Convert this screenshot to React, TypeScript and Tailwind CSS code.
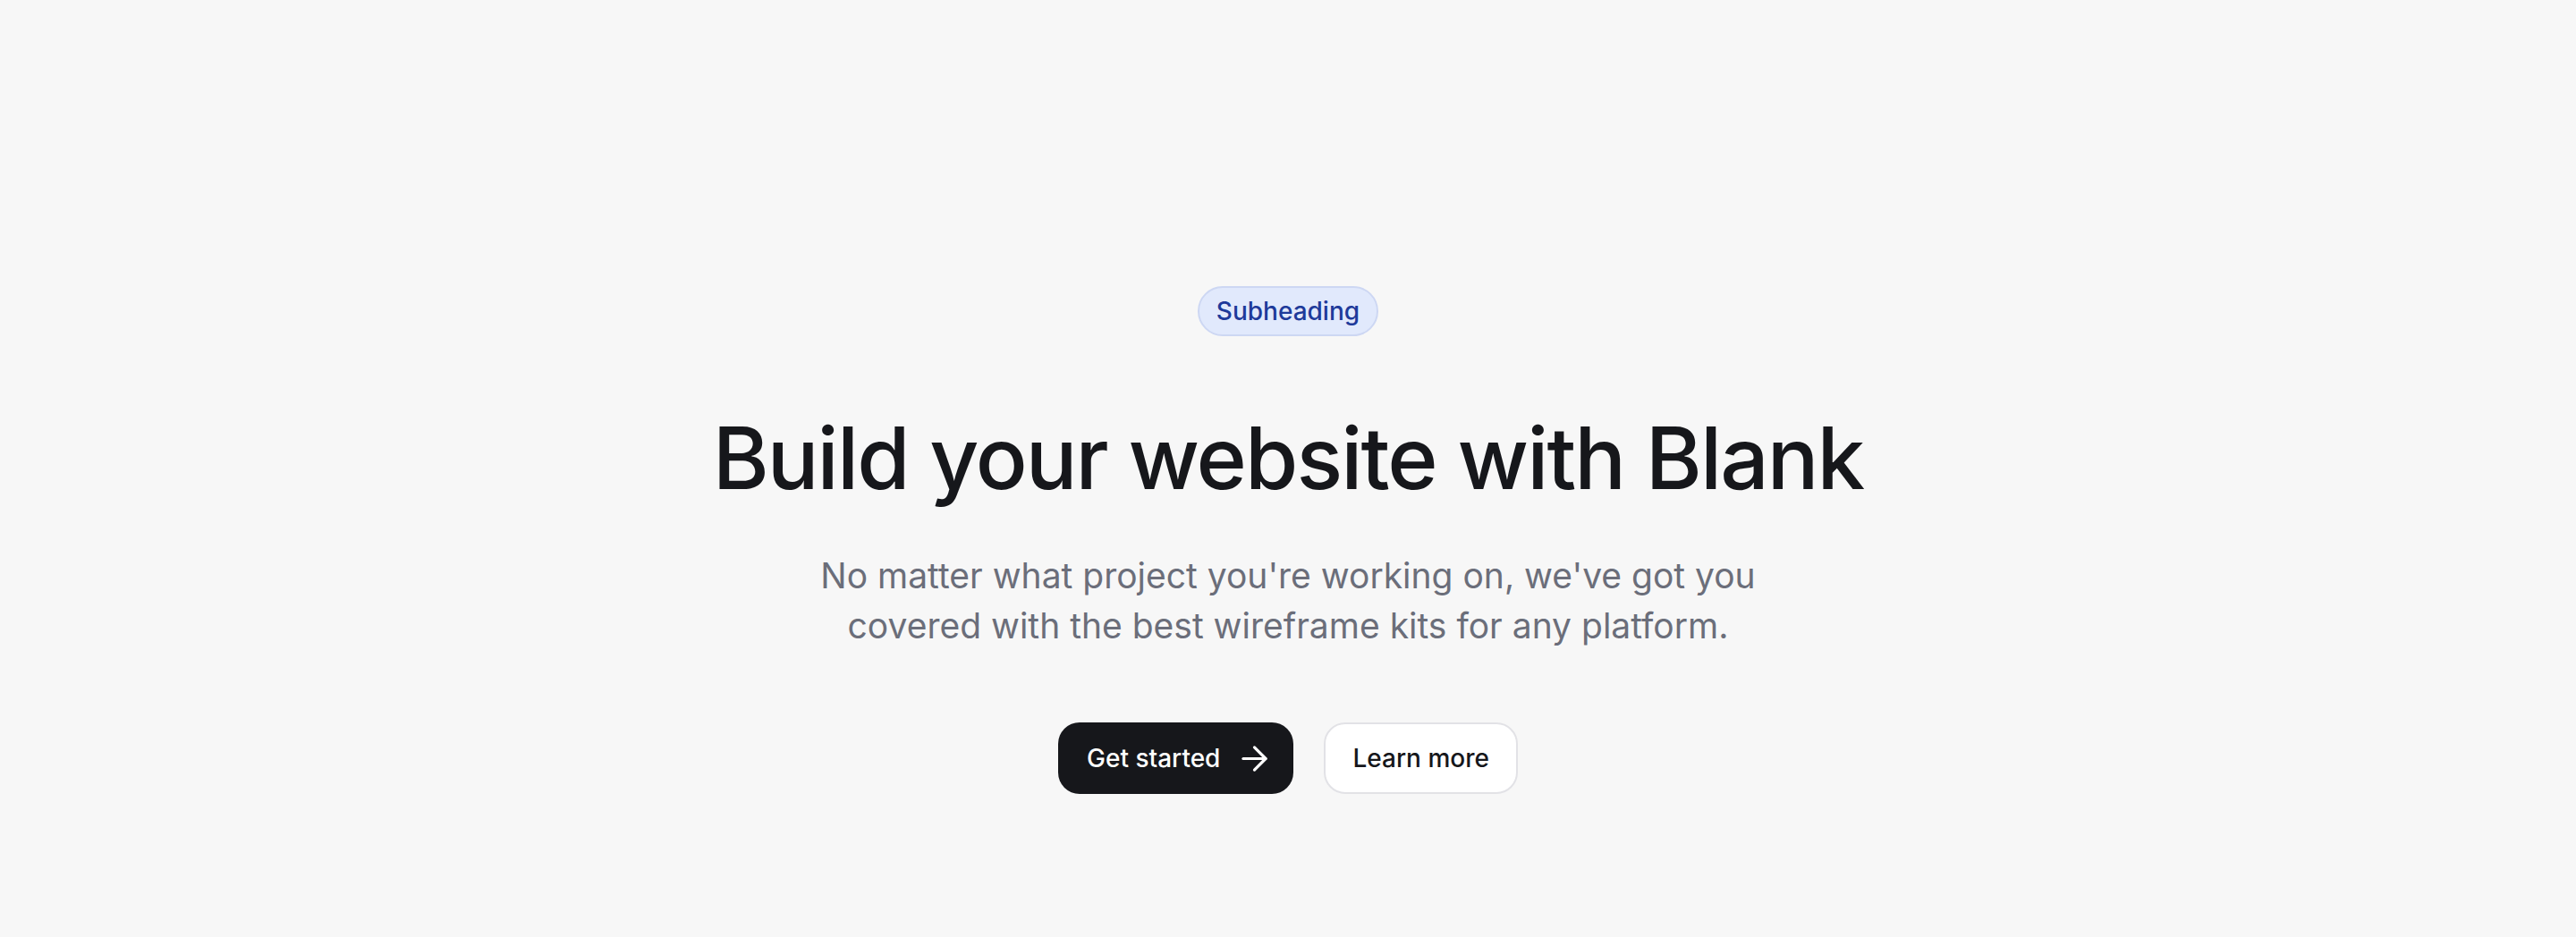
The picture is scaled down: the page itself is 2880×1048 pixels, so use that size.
import { ArrowRight } from 'lucide-react';

export default function App() {
  return (
    <div className="min-h-[1048px] w-full bg-[#f7f7f7] font-['Inter',sans-serif]">
      <section className="flex flex-col items-center px-8 pt-[320px] pb-[160px] text-center">
        {/* Badge */}
        <span className="inline-flex h-[56px] items-center rounded-full border-2 border-[#cdd7f3] bg-[#e1e9fc] px-[19px] text-[28px] font-medium text-[#1e3a9a]">
          Subheading
        </span>

        <h1 className="mt-[78px] text-[96px] leading-[116px] font-medium tracking-[-0.02em] text-[#16171b]">
          Build your website with Blank
        </h1>

        <p className="mt-[46px] max-w-[1152px] text-[39px] leading-[56px] text-[#6b6e7a]">
          No matter what project you're working on, we've got you covered with the best wireframe kits for any platform.
        </p>

        <div className="mt-[80px] flex items-center gap-[34px]">
          <button className="flex h-[80px] items-center gap-[17px] rounded-[24px] bg-[#16171b] pl-[32px] pr-[22px] text-[28px] font-medium text-white">
            Get started
            <ArrowRight className="h-[43px] w-[43px]" strokeWidth={1.8} />
          </button>
          <button className="flex h-[80px] items-center rounded-[24px] border-2 border-[#e2e2e6] bg-white px-[30px] text-[28px] font-medium text-[#16171b]">
            Learn more
          </button>
        </div>
      </section>
    </div>
  );
}
